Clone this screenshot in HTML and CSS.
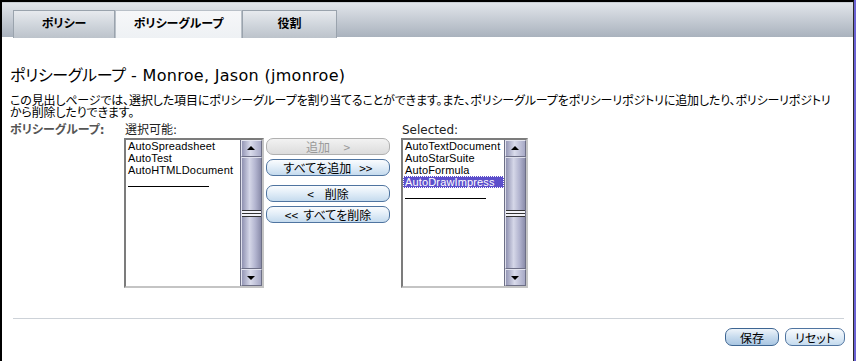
FILE: index.html
```html
<!DOCTYPE html>
<html lang="ja">
<head>
<meta charset="utf-8" />
<title>ポリシーグループ</title>
<link rel="stylesheet" href="styles.css">
</head>
<body>

<div class="frame">
  <div class="page">
    <div class="tabbar">
      <div class="tab tab-first">ポリシー</div>
      <div class="tab tab-active">ポリシーグループ</div>
      <div class="tab tab-last">役割</div>
    </div>

    <div class="content">
      <h1><span class="jp">ポリシーグループ</span> - Monroe, Jason (jmonroe)</h1>
      <p class="desc">この見出しページでは、選択した項目にポリシーグループを割り当てることができます。また、ポリシーグループをポリシーリポジトリに追加したり、ポリシーリポジトリ<br>から削除したりできます。</p>

      <div class="field">
        <div class="field-label">ポリシーグループ:</div>

        <div class="pick pick-left">
          <div class="pick-label">選択可能:</div>
          <div class="listbox">
            <div class="items">
              <div class="item">AutoSpreadsheet</div>
              <div class="item">AutoTest</div>
              <div class="item">AutoHTMLDocument</div>
              <div class="item"><span class="rule"></span></div>
            </div>
            <div class="scroll">
              <div class="arrow arrow-up"></div>
              <div class="thumb"><span class="grip"></span></div>
              <div class="arrow arrow-down"></div>
            </div>
          </div>
        </div>

        <div class="moves">
          <button class="pill pill-off">追加&nbsp;&nbsp;&nbsp;&nbsp;&nbsp;&gt;</button>
          <button class="pill">すべてを追加&nbsp;&nbsp;&nbsp;&gt;&gt;</button>
          <button class="pill pill-gap">&lt;&nbsp;&nbsp;&nbsp;&nbsp;削除</button>
          <button class="pill">&lt;&lt;&nbsp;&nbsp;すべてを削除</button>
        </div>

        <div class="pick pick-right">
          <div class="pick-label">Selected:</div>
          <div class="listbox">
            <div class="items">
              <div class="item">AutoTextDocument</div>
              <div class="item">AutoStarSuite</div>
              <div class="item">AutoFormula</div>
              <div class="item item-sel">AutoDrawImpress</div>
              <div class="item"><span class="rule"></span></div>
            </div>
            <div class="scroll">
              <div class="arrow arrow-up"></div>
              <div class="thumb"><span class="grip"></span></div>
              <div class="arrow arrow-down"></div>
            </div>
          </div>
        </div>
      </div>

      <div class="footer">
        <button class="pill pill-main">保存</button>
        <button class="pill">リセット</button>
      </div>
    </div>
  </div>
</div>

</body>
</html>
```

FILE: styles.css
```css
html, body {
    margin: 0;
    padding: 0;
    background: #fff;
}

body {
    font-family: "DejaVu Sans", "Noto Sans CJK JP", sans-serif;
    font-size: 12px;
    font-feature-settings: "palt";
    color: #000;
}

.frame {
    box-sizing: border-box;
    width: 856px;
    height: 361px;
    border-right: 2px solid #6a62d4;
}

.page {
    box-sizing: border-box;
    height: 100%;
    border-top: 2px solid #000;
    border-left: 2px solid #000;
    border-right: 1px solid #2a2a2a;
}

/* tabs */

.tabbar {
    display: flex;
    height: 35px;
    box-sizing: border-box;
    padding: 7px 0 0 11px;
    border-top: 1px solid #c9ced4;
    background: linear-gradient(#e1e5ea, #c8ced6 45%, #a9b2bd);
}

.tab {
    box-sizing: border-box;
    height: 28px;
    line-height: 26px;
    text-align: center;
    font-weight: bold;
    font-size: 12px;
    border: 1px solid #9aa3ad;
    border-bottom: none;
    background: linear-gradient(#e7eaee, #ccd2d9 60%, #bcc3cb);
}

.tab-first {
    width: 102px;
}

.tab-active {
    width: 127px;
    border-color: #b9c0c8;
    background: linear-gradient(#f6f7f9, #eef1f4);
}

.tab-last {
    width: 95px;
}

/* content */

.content {
    padding: 0 9px 0 8px;
}

h1 {
    margin: 29px 0 0;
    font-size: 16px;
    font-weight: normal;
    line-height: 20px;
    letter-spacing: 0.3px;
}

h1 .jp {
    letter-spacing: -0.3px;
}

.desc {
    margin: 9px 0 0;
    line-height: 12px;
    white-space: nowrap;
    letter-spacing: -0.15px;
}

.field {
    display: flex;
    align-items: flex-start;
    margin-top: 5px;
}

.field-label {
    width: 114px;
    line-height: 12px;
    font-weight: bold;
    color: #555;
}

.pick-label {
    line-height: 12px;
    margin: 0 0 2px 1px;
    color: #222;
}

.listbox {
    display: flex;
    box-sizing: border-box;
    height: 150px;
    border: 2px solid;
    border-color: #7c7c7c #c4c4c4 #c4c4c4 #7c7c7c;
    background: #fff;
}

.pick-left .listbox {
    width: 140px;
}

.pick-right {
    margin-left: 11px;
}

.pick-right .listbox {
    width: 127px;
}

.items {
    flex: 1;
    min-width: 0;
    overflow: hidden;
    font-family: "Liberation Sans", sans-serif;
    font-size: 11px;
    letter-spacing: 0.15px;
    line-height: 12px;
}

.item {
    height: 12px;
    padding-left: 2px;
    white-space: nowrap;
}

.item-sel {
    background: #5b4ecb;
    color: #fff;
    outline: 1px dotted #fff;
    outline-offset: -1px;
}

.rule {
    display: block;
    width: 81px;
    height: 1px;
    margin-top: 10px;
    background: #000;
}

/* scrollbar */

.scroll {
    flex-shrink: 0;
    display: flex;
    flex-direction: column;
    width: 21px;
    border-left: 1px solid #6d6f86;
    background: #6d6f86;
}

.arrow {
    height: 15px;
    position: relative;
    border: 1px solid #fff;
    border-color: #e4e5f0 #6d6f86 #6d6f86 #e4e5f0;
    background: linear-gradient(to right, #9597b6, #d9dbeb 45%, #a7a9c6);
}

.arrow::after {
    content: "";
    position: absolute;
    left: 5px;
    width: 0;
    height: 0;
    border-left: 4px solid transparent;
    border-right: 4px solid transparent;
}

.arrow-up::after {
    top: 5px;
    border-bottom: 4px solid #000;
}

.arrow-down::after {
    top: 6px;
    border-top: 4px solid #000;
}

.thumb {
    flex: 1;
    display: flex;
    align-items: center;
    border: 1px solid;
    border-color: #dfe0ec #6d6f86 #6d6f86 #dfe0ec;
    background: linear-gradient(to right, #8f91b1, #d5d7e8 40%, #b3b5d0 70%, #8b8dab);
}

.grip {
    display: block;
    width: 100%;
    height: 7px;
    background: repeating-linear-gradient(#333 0 1px, #f2f2f8 1px 3px);
}

/* buttons */

.moves {
    display: flex;
    flex-direction: column;
    gap: 4px;
    width: 124px;
    margin: 14px 0 0 2px;
}

.pill {
    box-sizing: border-box;
    height: 17px;
    padding: 0 6px;
    border: 1px solid #4f74a0;
    border-radius: 7px;
    background: linear-gradient(#fafcfe, #e3eef8 45%, #c5dbee);
    font-family: "Noto Sans CJK JP", "DejaVu Sans", sans-serif;
    font-feature-settings: "palt";
    font-size: 12px;
    line-height: 14px;
    color: #000;
    white-space: nowrap;
}

.pill-off {
    border-color: #b0b0b0;
    background: linear-gradient(#f2f2f2, #dcdcdc);
    color: #999;
}

.pill-gap {
    margin-top: 5px;
}

.footer {
    display: flex;
    justify-content: flex-end;
    gap: 6px;
    margin: 30px 0 0 3px;
    padding-top: 9px;
    border-top: 1px solid #cdd2d8;
}

.footer .pill {
    height: 18px;
    line-height: 15px;
}

.footer .pill-main {
    width: 54px;
    border-color: #3d6592;
    background: linear-gradient(#eef4fa, #c7dbee 50%, #a9c6e2);
}

.footer .pill:last-child {
    width: 60px;
    margin-right: -1px;
}
```
